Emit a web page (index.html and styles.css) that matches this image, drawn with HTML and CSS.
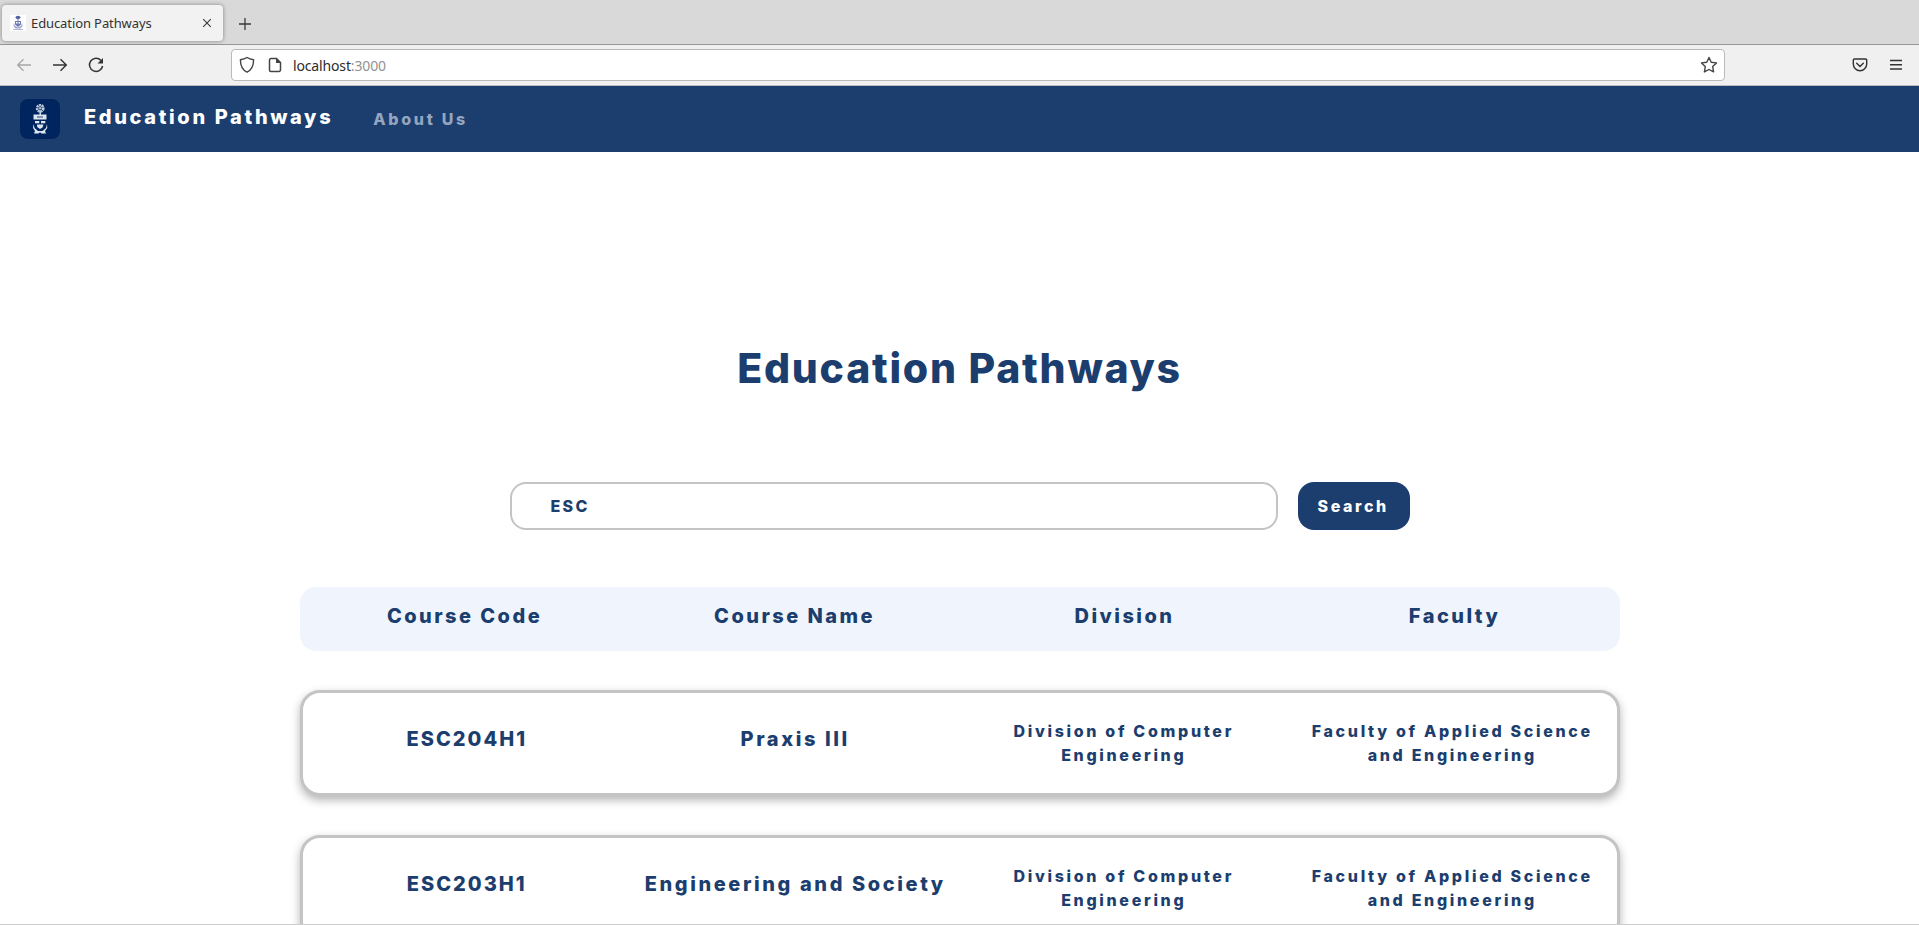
FILE: index.html
```
<!DOCTYPE html>
<html lang="en">
<head>
<meta charset="utf-8">
<title>Education Pathways</title>
<link rel="stylesheet" href="styles.css">
</head>
<body>
<div class="tabstrip">
  <div class="tab">
    <svg class="favicon" width="16" height="16" viewBox="0 0 16 16"><rect width="16" height="16" fill="#fff"/><g fill="#5363a5"><ellipse cx="8" cy="2.4" rx="2.5" ry="1.7"/><path d="M7.5 3h1v3h-1zM5 6h6v3.5L8 12 5 9.500z" opacity=".85"/><path d="M4 8l1 3 3 1.500 3-1.500 1-3 .5 3-2 2.500h-5l-2-2.500z" opacity=".6"/><path d="M3 14h10v1H3z" opacity=".45"/></g><path d="M6 7h1.500v1.500H6zM8.500 7H10v1.500H8.500z" fill="#fff"/></svg>
    <span class="tab-title">Education Pathways</span>
    <svg class="tab-close" width="10" height="10" viewBox="0 0 10 10"><path d="M1.200 1.200l7.600 7.600M8.800 1.200L1.200 8.800" stroke="#3a3a3a" stroke-width="1.100"/></svg>
  </div>
  <svg class="new-tab" width="14" height="14" viewBox="0 0 14 14"><path d="M7 1v12M1 7h12" stroke="#3a3a3a" stroke-width="1.300"/></svg>
</div>
<div class="toolbar">
  <div class="nav-buttons">
    <svg width="16" height="16" viewBox="0 0 16 16" fill="none" stroke="#a5a5a5" stroke-width="1.300"><path d="M15 8H2M7.500 2.200L1.700 8l5.800 5.800"/></svg>
    <svg width="16" height="16" viewBox="0 0 16 16" fill="none" stroke="#333" stroke-width="1.400"><path d="M1 8h13M8.500 2.200L14.300 8l-5.800 5.800"/></svg>
    <svg width="16" height="16" viewBox="0 0 16 16" fill="none" stroke="#333" stroke-width="1.500"><path d="M13 3.400A6.600 6.600 0 1 0 14.600 9"/><path d="M15 1v5.500H9.500z" fill="#333" stroke="none"/></svg>
  </div>
  <div class="urlbar">
    <svg width="16" height="18" viewBox="0 0 16 18" fill="none" stroke="#444" stroke-width="1.400" stroke-linejoin="round"><path d="M8 1.500c2 1.300 4 1.900 6.600 2.200 0 5.500-1.600 10-6.600 12.500C3 13.700 1.400 9.200 1.400 3.700 4 3.400 6 2.800 8 1.500z"/></svg>
    <svg class="page-icon" width="14" height="16" viewBox="0 0 14 16" fill="none" stroke="#444" stroke-width="1.500"><path d="M3 1.500h5.500L12.500 5.500v7.500a1.500 1.500 0 0 1-1.500 1.500H3A1.500 1.500 0 0 1 1.500 13V3A1.500 1.500 0 0 1 3 1.500z"/><path d="M8 1l5 5H8z" fill="#444" stroke="none"/></svg>
    <span class="url">localhost<span class="port">:3000</span></span>
    <svg class="star" width="18" height="18" viewBox="0 0 18 18" fill="none" stroke="#444" stroke-width="1.400" stroke-linejoin="round"><path d="M9 1.500l2.200 4.700 5.300.7-3.800 3.700.9 5.300L9 13.500l-4.600 2.400.9-5.300L1.500 6.900l5.300-.7z"/></svg>
  </div>
  <div class="tools">
    <svg width="16" height="16" viewBox="0 0 16 16" fill="none" stroke="#333" stroke-width="1.400" stroke-linejoin="round" stroke-linecap="round"><path d="M2.500 2h11a1.200 1.200 0 0 1 1.200 1.200V7a6.700 6.700 0 0 1-13.400 0V3.200A1.200 1.200 0 0 1 2.500 2z"/><path d="M4.700 6.200L8 9.400l3.300-3.200"/></svg>
    <svg width="12" height="12" viewBox="0 0 12 12" stroke="#333" stroke-width="1.400"><path d="M0 1.500h12M0 5.700h12M0 10h12"/></svg>
  </div>
</div>
<nav class="navbar">
  <svg class="crest" width="40" height="40" viewBox="0 0 40 40"><rect width="40" height="40" rx="8" fill="#00245d"/><g fill="#dde5ef"><path d="M19.500 12h1.400v4h-1.400z"/><path d="M13.500 15.500h13v5h-13zM15 22h4.300v2.300H15zM21 22h4.300v2.300H21z"/><path d="M17 25.500h6.500l-1 3-2.500 1.500-2.800-2z"/><path d="M13.500 25l1 4 3.500 3h4.500l3.500-3 1-4 .3 4-2.300 3 1 2.500h-4.500L20 33.200l-1.500 1.300H14l1-2.500-2-3z"/></g><circle cx="20.200" cy="9.300" r="3.100" fill="none" stroke="#c0cddd" stroke-width="2.600" stroke-dasharray="2 .6"/><circle cx="20.200" cy="9.300" r="1.300" fill="#a9bace"/><path d="M17 17h6v2h-6z" fill="#8197b7"/></svg>
  <span class="brand">Education Pathways</span>
  <span class="nav-link">About Us</span>
</nav>
<main class="page">
  <h1 class="title">Education Pathways</h1>
  <div class="search">
    <div class="search-input">ESC</div>
    <div class="search-button">Search</div>
  </div>
  <div class="row head">
    <div>Course Code</div><div>Course Name</div><div>Division</div><div>Faculty</div>
  </div>
  <div class="row card">
    <div class="code">ESC204H1</div><div class="name">Praxis III</div><div class="detail">Division of Computer Engineering</div><div class="detail">Faculty of Applied Science and Engineering</div>
  </div>
  <div class="row card">
    <div class="code">ESC203H1</div><div class="name">Engineering and Society</div><div class="detail">Division of Computer Engineering</div><div class="detail">Faculty of Applied Science and Engineering</div>
  </div>
</main>
</body>
</html>
```
FILE: styles.css
```
* { box-sizing: border-box; }
body {
  margin: 0;
  height: 925px;
  display: flex;
  flex-direction: column;
  overflow: hidden;
  background: #fff;
  color: #1c3e6e;
  font-family: Inter, "Open Sans", sans-serif;
  font-weight: 800;
}
svg { display: block; flex: none; }

/* Browser chrome */
.tabstrip {
  height: 45px;
  flex: none;
  display: flex;
  align-items: flex-start;
  padding: 5px 2px 0;
  background: #d9d9d9;
  border-bottom: 1px solid #979797;
}
.tab {
  width: 221px;
  height: 36px;
  display: flex;
  align-items: center;
  padding: 0 11px 0 8px;
  border-radius: 4px;
  background: #f2f2f2;
  box-shadow: 0 0 4px rgba(0, 0, 0, .4);
  color: #333;
  font: 400 13px "Noto Sans", sans-serif;
  letter-spacing: -.1px;
}
.tab-title { flex: 1; margin-left: 5px; }
.new-tab { margin: 12px 0 0 15px; }
.toolbar {
  height: 41px;
  flex: none;
  display: flex;
  align-items: center;
  background: #f0f0f0;
  border-bottom: 1px solid #bcbcbc;
}
.nav-buttons { width: 231px; display: flex; gap: 20px; padding-left: 16px; }
.urlbar {
  width: 1494px;
  height: 32px;
  display: flex;
  align-items: center;
  padding: 0 6px 0 7px;
  background: #fff;
  border: 1px solid #b9b9b9;
  border-radius: 4px;
}
.page-icon { margin-left: 13px; }
.url {
  flex: 1;
  margin-left: 11px;
  color: #2c2c2c;
  font: 400 14px "Noto Sans", sans-serif;
  letter-spacing: -.15px;
}
.port { color: #929292; }
.tools { display: flex; align-items: center; gap: 22px; margin-left: 127px; }

/* Site navigation */
.navbar {
  height: 66px;
  flex: none;
  display: flex;
  align-items: center;
  padding-left: 20px;
  background: #1c3e6e;
}
.brand {
  margin: 0 0 4px 24px;
  color: #fff;
  font-size: 20px;
  letter-spacing: 2.650px;
}
.nav-link {
  margin-left: 40px;
  color: #94a5bf;
  font-size: 16px;
  letter-spacing: 2.700px;
}

/* Search page */
.page {
  flex: 1;
  display: flex;
  flex-direction: column;
  align-items: center;
  min-height: 0;
  padding-top: 192px;
  overflow: hidden;
  border-bottom: 1px solid #ccc;
}
.title {
  flex: none;
  margin: 0 0 90px;
  font-size: 41px;
  font-weight: 800;
  line-height: 48px;
  letter-spacing: 1.750px;
}
.search { flex: none; display: flex; gap: 20px; }
.search-input, .search-button {
  height: 48px;
  border-radius: 16px;
  font-size: 16px;
  line-height: 48px;
}
.search-input {
  width: 768px;
  padding-left: 39px;
  border: 2px solid #c4c4c4;
  line-height: 44px;
  letter-spacing: 2.300px;
}
.search-button {
  width: 112px;
  padding-left: 20px;
  background: #1c3e6e;
  color: #fff;
  letter-spacing: 2.600px;
}
.row {
  width: 1320px;
  flex: none;
  display: grid;
  grid-template-columns: repeat(4, 1fr);
  text-align: center;
  font-size: 20px;
  line-height: 24px;
}
.head {
  height: 64px;
  margin: 57px 0 39px;
  padding-top: 17px;
  border-radius: 16px;
  background: #f0f5fd;
  letter-spacing: 2.450px;
}
.card {
  height: 106px;
  margin-bottom: 39px;
  padding-top: 26px;
  border: 3px solid #c4c4c4;
  border-radius: 20px;
  background: #fff;
  box-shadow: 0 4px 10px rgba(0, 0, 0, .3);
}
.code { padding-top: 8px; letter-spacing: 2px; }
.name { padding-top: 8px; letter-spacing: 2.600px; }
.detail { padding: 0 14px; font-size: 16px; letter-spacing: 2.680px; }
```
